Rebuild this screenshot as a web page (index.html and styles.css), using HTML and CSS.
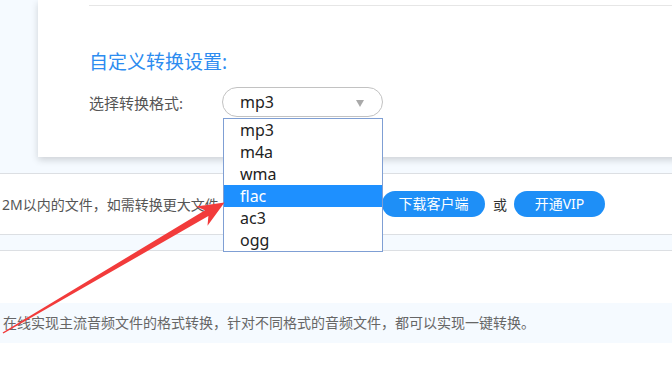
FILE: index.html
```html
<!DOCTYPE html>
<html lang="zh-CN">
<head>
<meta charset="utf-8">
<title>音频格式转换</title>
<link rel="stylesheet" href="styles.css">
</head>
<body>
<div class="page">
  <section class="top">
    <div class="card">
      <div class="card-line"></div>
      <h2 class="heading">自定义转换设置:</h2>
      <div class="format-row">
        <span class="label">选择转换格式:</span>
        <div class="select">
          <span class="select-value">mp3</span>
          <span class="caret"></span>
          <ul class="options">
            <li class="option">mp3</li>
            <li class="option">m4a</li>
            <li class="option">wma</li>
            <li class="option option-active">flac</li>
            <li class="option">ac3</li>
            <li class="option">ogg</li>
          </ul>
        </div>
      </div>
    </div>
  </section>
  <section class="notice">
    <span class="notice-text">2M以内的文件，如需转换更大文件</span>
    <a class="btn btn-download">下载客户端</a>
    <span class="or">或</span>
    <a class="btn btn-vip">开通VIP</a>
  </section>
  <div class="strip"></div>
  <div class="spacer"></div>
  <section class="desc">
    <p class="desc-text">在线实现主流音频文件的格式转换，针对不同格式的音频文件，都可以实现一键转换。</p>
  </section>
  <svg class="arrow" width="672" height="389" viewBox="0 0 672 389">
    <polygon fill="#f23b3b" points="2.6,332.4 205,210.3 196,206.5 224.5,202.5 207.5,225.8 208.4,216.1 3.4,333.6"/>
  </svg>
</div>
</body>
</html>
```
FILE: styles.css
```css
html, body {
  margin: 0;
  padding: 0;
  width: 672px;
  height: 389px;
  overflow: hidden;
  background: #ffffff;
}
.page {
  position: relative;
  width: 672px;
  height: 389px;
  overflow: hidden;
  font-family: "Noto Sans", "Noto Sans CJK SC", sans-serif;
}
.top {
  height: 173px;
  background: #f5faff;
  border-bottom: 1px solid #dcdfe3;
  position: relative;
  z-index: 2;
}
.card {
  margin-left: 38px;
  width: 720px;
  height: 157px;
  box-sizing: border-box;
  padding: 5px 0 0 51px;
  background: #ffffff;
  box-shadow: 0 3px 7px rgba(0, 0, 0, 0.16);
}
.card-line {
  border-top: 1px solid #e6e6e6;
}
.heading {
  margin: 44px 0 0;
  font-size: 19px;
  line-height: 24px;
  font-weight: normal;
  color: #2d8cf0;
}
.format-row {
  margin-top: 13px;
  display: flex;
  align-items: center;
  height: 30px;
}
.label {
  width: 133px;
  flex: none;
  font-size: 15px;
  color: #555555;
}
.select {
  position: relative;
  width: 161px;
  height: 30px;
  box-sizing: border-box;
  border: 1px solid #c2c2c2;
  border-radius: 15px;
  display: flex;
  align-items: center;
  justify-content: space-between;
  padding: 0 18px 0 17px;
}
.select-value {
  font-size: 16px;
  color: #222222;
  line-height: 28px;
}
.caret {
  width: 0;
  height: 0;
  border-left: 4.5px solid transparent;
  border-right: 4.5px solid transparent;
  border-top: 7px solid #a9a9a9;
  margin-top: 2px;
}
.options {
  position: absolute;
  top: 30px;
  left: 0;
  width: 160px;
  box-sizing: border-box;
  margin: 0;
  padding: 0;
  list-style: none;
  background: #ffffff;
  border: 1px solid #7f9fd4;
  z-index: 5;
}
.option {
  height: 22px;
  line-height: 22px;
  padding-left: 16px;
  font-size: 16px;
  color: #222222;
}
.option-active {
  background: #1e90ff;
  color: #ffffff;
}
.notice {
  height: 60px;
  border-bottom: 1px solid #dcdfe3;
  display: flex;
  align-items: center;
  padding-left: 2px;
}
.notice-text {
  width: 380px;
  flex: none;
  white-space: nowrap;
  overflow: hidden;
  font-size: 14px;
  color: #555555;
}
.btn {
  flex: none;
  height: 26px;
  line-height: 26px;
  border-radius: 13px;
  background: #1e8ff7;
  color: #ffffff;
  font-size: 14px;
  text-align: center;
}
.btn-download {
  width: 103px;
}
.btn-vip {
  width: 91px;
}
.or {
  margin: 0 7px 0 8px;
  font-size: 14px;
  color: #333333;
}
.strip {
  height: 15px;
  background: #f5faff;
  border-bottom: 1px solid #dcdfe3;
}
.spacer {
  height: 52px;
}
.desc {
  height: 40px;
  background: #f5faff;
}
.desc-text {
  margin: 0 0 0 3px;
  line-height: 40px;
  font-size: 14px;
  color: #666666;
  white-space: nowrap;
}
.arrow {
  position: absolute;
  left: 0;
  top: 0;
  z-index: 10;
  pointer-events: none;
}
```
